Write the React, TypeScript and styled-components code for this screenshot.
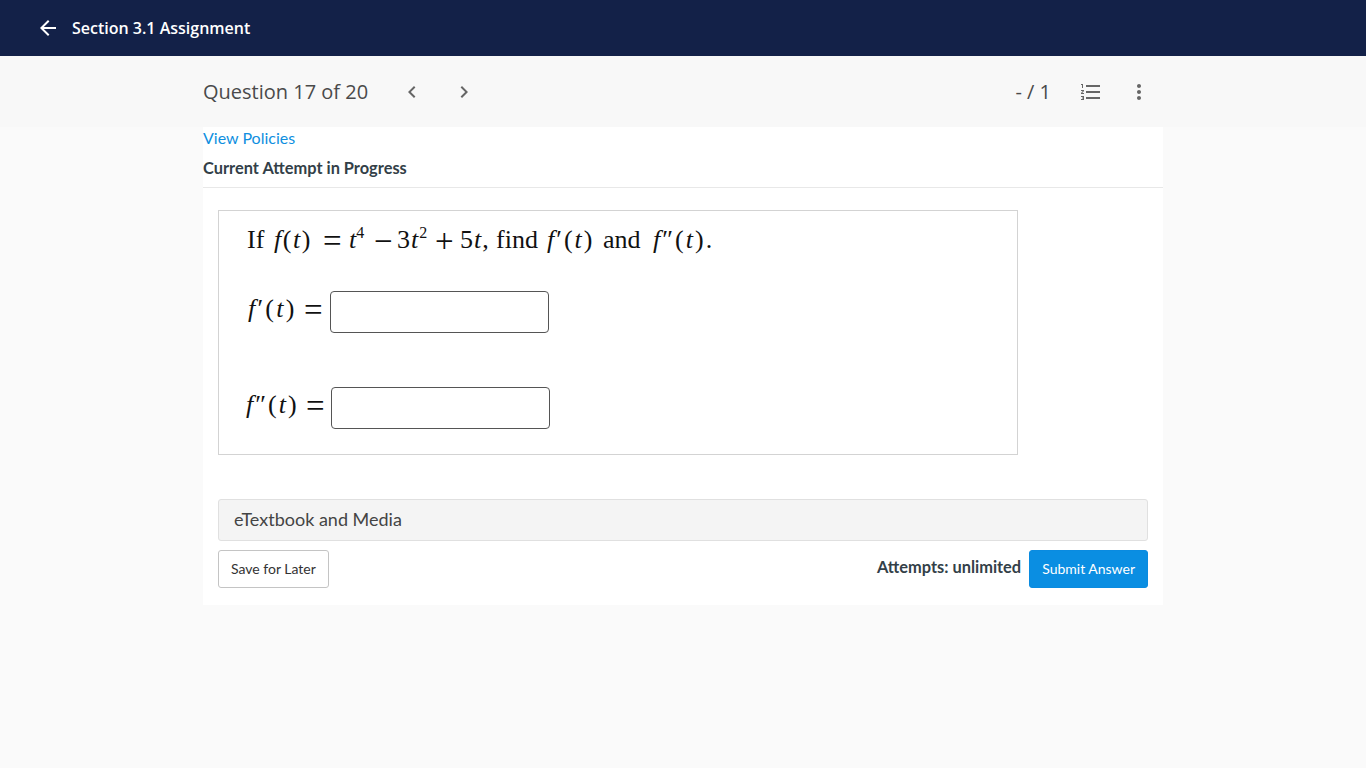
import styled, { createGlobalStyle } from "styled-components";

const GlobalStyle = createGlobalStyle`
  html, body {
    margin: 0;
    background: #fafafa;
    font-family: Lato, "Liberation Sans", sans-serif;
  }
`;

const Page = styled.div`
  min-height: 768px;
  background: #fafafa;
`;

const TopBar = styled.header`
  height: 56px;
  background: #132148;
  color: #fff;
  display: flex;
  align-items: center;
  padding-left: 36px;
  gap: 12px;
`;

const BarTitle = styled.h1`
  margin: 0;
  font-family: "Open Sans", sans-serif;
  font-size: 16px;
  font-weight: 600;
`;

const QuestionBar = styled.div`
  height: 71px;
  background: #f8f8f8;
`;

const QuestionInner = styled.div`
  width: 960px;
  height: 100%;
  margin-left: 203px;
  display: flex;
  align-items: center;
  color: #4a4a4a;
  font-family: "Open Sans", sans-serif;
`;

const QuestionLabel = styled.span`
  font-size: 20px;
  width: 183px;
`;

const IconSlot = styled.span`
  width: 52px;
  display: flex;
  justify-content: center;
  color: #666;
`;

const Score = styled.span`
  margin-left: auto;
  font-size: 20px;
  margin-right: 28px;
`;

const RightIcon = styled.span<{ $gap: number }>`
  width: 24px;
  height: 24px;
  display: flex;
  color: #666;
  margin-right: ${(p) => p.$gap}px;
`;

const Sheet = styled.main`
  width: 960px;
  height: 478px;
  margin-left: 203px;
  background: #fff;
`;

const PoliciesLink = styled.a`
  display: block;
  padding-top: 1px;
  font-size: 16px;
  line-height: 19px;
  color: #0f8fe0;
`;

const AttemptHeading = styled.div`
  height: 41px;
  padding-top: 12px;
  box-sizing: border-box;
  border-bottom: 1px solid #e8e8e8;
  font-size: 16.4px;
  line-height: 18px;
  font-weight: 700;
  color: #333f48;
`;

const Body = styled.div`
  padding: 22px 15px 0;
`;

const ProblemBox = styled.div`
  width: 800px;
  height: 245px;
  box-sizing: border-box;
  border: 1px solid #d3d3d3;
  padding: 12px 0 0 28px;
  font-family: "Liberation Serif", serif;
  font-size: 26px;
  line-height: 34px;
  color: #111;
`;

const Statement = styled.div`
  display: flex;
  align-items: flex-start;
  height: 34px;
  white-space: nowrap;
`;

const MathRow = styled.div<{ $top: number; $left: number }>`
  display: flex;
  align-items: center;
  white-space: nowrap;
  margin-top: ${(p) => p.$top}px;
  margin-left: ${(p) => p.$left}px;
`;

const MathText = styled.span<{ $w: number }>`
  display: flex;
  align-items: flex-start;
  flex: none;
  width: ${(p) => p.$w}px;
  padding-bottom: 5px;
`;

// one piece of the formula, set in the column it has in the typeset line
const Term = styled.span<{ $w: number; $spread?: number }>`
  flex: none;
  width: ${(p) => p.$w}px;
  letter-spacing: ${(p) => p.$spread ?? 0}px;
`;

const Operator = styled.span<{ $w: number }>`
  flex: none;
  width: ${(p) => p.$w}px;
  font-size: 33px;
  line-height: 36px;
`;

const Answer = styled.input`
  width: 219px;
  height: 42px;
  box-sizing: border-box;
  border: 1px solid #555;
  border-radius: 4px;
  background: #fff;
`;

const Sup = styled.sup`
  font-size: 16px;
  line-height: 0;
`;

const Media = styled.div`
  height: 42px;
  margin-top: 44px;
  box-sizing: border-box;
  border: 1px solid #e0e0e0;
  border-radius: 3px;
  background: #f4f4f4;
  padding-left: 15px;
  font-size: 18px;
  line-height: 39px;
  color: #444;
`;

const Footer = styled.div`
  display: flex;
  align-items: flex-start;
  margin-top: 9px;
`;

const Attempts = styled.span`
  margin-left: auto;
  margin-right: 8px;
  font-size: 16.4px;
  line-height: 34px;
  font-weight: 700;
  color: #333f48;
`;

const Button = styled.button<{ $primary?: boolean }>`
  height: 38px;
  padding: 0 12px 2px;
  border-radius: 3px;
  font-family: Lato, sans-serif;
  font-size: 14px;
  border: 1px solid ${(p) => (p.$primary ? "#0a8be0" : "#c4c4c4")};
  background: ${(p) => (p.$primary ? "#0a8ee2" : "#fff")};
  color: ${(p) => (p.$primary ? "#fff" : "#333")};
`;

const Icon = ({ d }: { d: string }) => (
  <svg width="24" height="24" viewBox="0 0 24 24" fill="currentColor">
    <path d={d} />
  </svg>
);

const ICONS = {
  back: "M20 11H7.83l5.59-5.59L12 4l-8 8 8 8 1.41-1.41L7.83 13H20v-2z",
  prev: "M15.41 7.41L14 6l-6 6 6 6 1.41-1.41L10.83 12z",
  next: "M10 6L8.59 7.41 13.17 12l-4.58 4.59L10 18l6-6z",
  list: "M2 17h2v.5H3v1h1v.5H2v1h3v-4H2v1zm1-9h1V4H2v1h1v3zm-1 3h1.8L2 13.1v.9h3v-1H3.2L5 10.9V10H2v1zm5-6v2h14V5H7zm0 14h14v-2H7v2zm0-6h14v-2H7v2z",
  more: "M12 8c1.1 0 2-.9 2-2s-.9-2-2-2-2 .9-2 2 .9 2 2 2zm0 2c-1.1 0-2 .9-2 2s.9 2 2 2 2-.9 2-2-.9-2-2-2zm0 6c-1.1 0-2 .9-2 2s.9 2 2 2 2-.9 2-2-.9-2-2-2z",
};

const App = () => {
  return (
    <Page>
      <GlobalStyle />
      <TopBar>
        <Icon d={ICONS.back} />
        <BarTitle>Section 3.1 Assignment</BarTitle>
      </TopBar>
      <QuestionBar>
        <QuestionInner>
          <QuestionLabel>Question 17 of 20</QuestionLabel>
          <IconSlot>
            <Icon d={ICONS.prev} />
          </IconSlot>
          <IconSlot>
            <Icon d={ICONS.next} />
          </IconSlot>
          <Score>- / 1</Score>
          <RightIcon $gap={24}>
            <Icon d={ICONS.list} />
          </RightIcon>
          <RightIcon $gap={12}>
            <Icon d={ICONS.more} />
          </RightIcon>
        </QuestionInner>
      </QuestionBar>
      <Sheet>
        <PoliciesLink>View Policies</PoliciesLink>
        <AttemptHeading>Current Attempt in Progress</AttemptHeading>
        <Body>
          <ProblemBox>
            <Statement>
              <Term $w={27}>If</Term>
              <Term $w={49} $spread={1.5}>
                <i>f</i>(<i>t</i>)
              </Term>
              <Operator $w={26}>=</Operator>
              <Term $w={25}>
                <i>t</i>
                <Sup>4</Sup>
              </Term>
              <Operator $w={23}>−</Operator>
              <Term $w={38} $spread={1}>
                3<i>t</i>
                <Sup>2</Sup>
              </Term>
              <Operator $w={25}>+</Operator>
              <Term $w={36} $spread={1}>
                5<i>t</i>,
              </Term>
              <Term $w={51}>find</Term>
              <Term $w={56} $spread={2}>
                <i>f</i>′(<i>t</i>)
              </Term>
              <Term $w={50}>and</Term>
              <Term $w={62} $spread={2}>
                <i>f</i>″(<i>t</i>).
              </Term>
            </Statement>
            <MathRow $top={34} $left={1}>
              <MathText $w={82}>
                <Term $w={56} $spread={2.2}>
                  <i>f</i>′(<i>t</i>)
                </Term>
                <Operator $w={25}>=</Operator>
              </MathText>
              <Answer />
            </MathRow>
            <MathRow $top={54} $left={-1}>
              <MathText $w={85}>
                <Term $w={60} $spread={2}>
                  <i>f</i>″(<i>t</i>)
                </Term>
                <Operator $w={25}>=</Operator>
              </MathText>
              <Answer />
            </MathRow>
          </ProblemBox>
          <Media>eTextbook and Media</Media>
          <Footer>
            <Button>Save for Later</Button>
            <Attempts>Attempts: unlimited</Attempts>
            <Button $primary>Submit Answer</Button>
          </Footer>
        </Body>
      </Sheet>
    </Page>
  );
};

export default App;
